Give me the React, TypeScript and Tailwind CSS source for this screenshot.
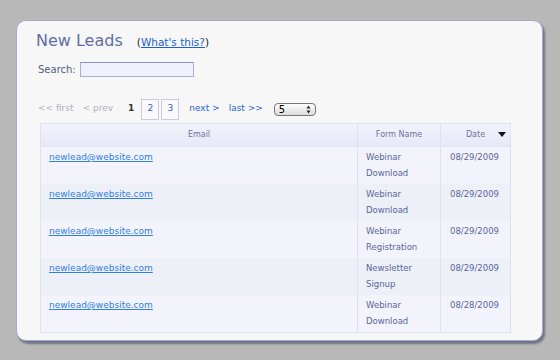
import React from "react";

type Lead = { email: string; form: [string, string]; date: string };

const leads: Lead[] = [
  { email: "newlead@website.com", form: ["Webinar", "Download"], date: "08/29/2009" },
  { email: "newlead@website.com", form: ["Webinar", "Download"], date: "08/29/2009" },
  { email: "newlead@website.com", form: ["Webinar", "Registration"], date: "08/29/2009" },
  { email: "newlead@website.com", form: ["Newsletter", "Signup"], date: "08/29/2009" },
  { email: "newlead@website.com", form: ["Webinar", "Download"], date: "08/28/2009" },
];

export default function App() {
  return (
    <div className="w-[560px] h-[360px] bg-[#b8b8b8] pt-[20px] pl-[16px] font-['DejaVu_Sans','Liberation_Sans',sans-serif]">
      <div className="w-[527px] h-[321px] bg-[#f7f7f7] border border-[#a3a9d6] rounded-[10px] shadow-[2px_3px_2px_rgba(60,60,80,0.55)] pl-[19px] pt-[9px]">
        {/* Title */}
        <div className="flex items-baseline h-[22px]">
          <h1 className="text-[16px] text-[#5f6ea3] leading-[22px]">New Leads</h1>
          <span className="ml-[14px] text-[10.5px] text-[#222]">
            (<a href="#" className="text-[#1a5fd6] underline">What's this?</a>)
          </span>
        </div>

        {/* Search */}
        <div className="flex items-center mt-[10px] pl-[2px] h-[15px]">
          <span className="text-[10px] text-[#555c85]">Search:</span>
          <input className="ml-[4px] w-[114px] h-[15px] bg-[#eef0fb] border border-[#a7aed8] border-t-[#8f96c4] outline-none" />
        </div>

        {/* Pagination */}
        <div className="flex items-center mt-[21px] pl-[2px] h-[22px] text-[9px]">
          <span className="text-[#b0b0b8]">&lt;&lt; first</span>
          <span className="ml-[9px] text-[#b0b0b8]">&lt; prev</span>
          <span className="ml-[15px] font-bold text-[#333]">1</span>
          <span className="ml-[7px] w-[18px] h-[21px] border border-[#c8ccdc] bg-[#f9f9fb] text-[#3366cc] flex items-center justify-center">2</span>
          <span className="ml-[2px] w-[18px] h-[21px] border border-[#c8ccdc] bg-[#f9f9fb] text-[#3366cc] flex items-center justify-center">3</span>
          <span className="ml-[10px] text-[#2d63cc]">next &gt;</span>
          <span className="ml-[9px] text-[#2d63cc]">last &gt;&gt;</span>
          <div className="ml-[11px] w-[42px] h-[13px] rounded-[4px] border border-[#777] bg-gradient-to-b from-[#ffffff] to-[#dcdcdc] flex items-center justify-between px-[4px] text-[10px] text-black">
            <span>5</span>
            <svg width="5" height="9" viewBox="0 0 5 9">
              <path d="M2.5 0.5 L4.5 3.5 L0.5 3.5 Z" fill="#222" />
              <path d="M2.5 8.5 L4.5 5.5 L0.5 5.5 Z" fill="#222" />
            </svg>
          </div>
        </div>

        {/* Table */}
        <div className="mt-[3px] ml-[4px] w-[471px] border border-[#dde1f3]">
          <div className="flex h-[23px] bg-gradient-to-b from-[#f1f2fb] to-[#e7e9f7] border-b border-[#e1e4f4] text-[8px] text-[#6b72a4]">
            <div className="w-[317px] flex items-center justify-center border-r border-[#dde1f3]">Email</div>
            <div className="w-[83px] flex items-center justify-center border-r border-[#dde1f3]">Form Name</div>
            <div className="flex-1 flex items-center justify-center relative">
              Date
              <svg className="absolute right-[4px] top-[8px]" width="8" height="5" viewBox="0 0 8 5">
                <path d="M0 0 L8 0 L4 5 Z" fill="#111" />
              </svg>
            </div>
          </div>
          {leads.map((l, i) => (
            <div
              key={i}
              className={`flex h-[37px] text-[8.5px] leading-[15px] text-[#5a649a] ${i % 2 === 0 ? "bg-[#f3f4fb]" : "bg-[#eef0f8]"}`}
            >
              <div className="w-[317px] pl-[8px] pt-[3px] border-r border-[#dde1f3]">
                <a href="#" className="text-[9px] text-[#2f7ee0] underline">{l.email}</a>
              </div>
              <div className="w-[83px] pl-[8px] pt-[3px] border-r border-[#dde1f3]">
                <div>{l.form[0]}</div>
                <div className="mt-[1px]">{l.form[1]}</div>
              </div>
              <div className="flex-1 pl-[9px] pt-[3px]">{l.date}</div>
            </div>
          ))}
        </div>
      </div>
    </div>
  );
}
